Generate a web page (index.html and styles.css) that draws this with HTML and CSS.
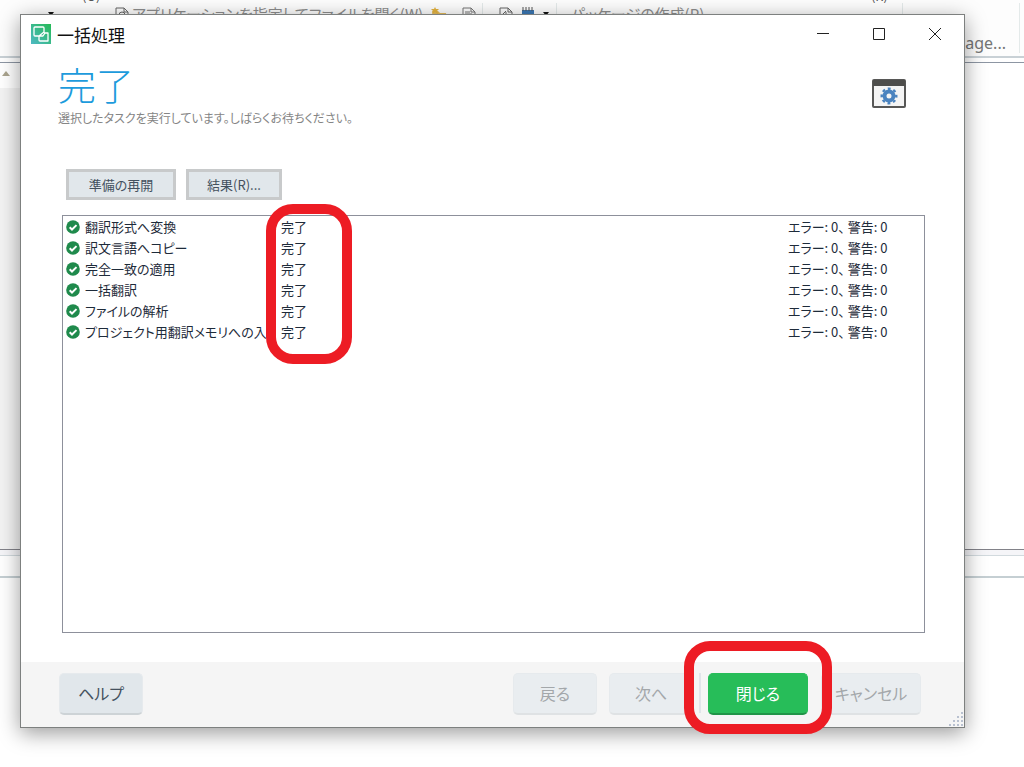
FILE: index.html
```
<!DOCTYPE html>
<html lang="ja">
<head>
<meta charset="UTF-8">
<title>一括処理</title>
<link rel="stylesheet" href="styles.css">
</head>
<body>
<div class="app">
<div class="ribbon">
<div class="rowtop"><span>(O)</span><span>(R)</span></div>
<div class="rowmid">
<div class="group g1">
<i class="drop"></i>
<svg class="ico" viewBox="0 0 14 16"><path d="M1 15V1h8l4 4v10z M9 1v4h4" fill="none" stroke="#666"/><circle cx="7" cy="8" r="3" fill="none" stroke="#666"/></svg>
<span class="cmd">アプリケーションを指定してファイルを開く(W)</span>
<svg class="folder" viewBox="0 0 16 16"><path d="M1 4h6l2 2h6l1 8H3z" fill="#e8bd5c"/><path d="M4 0l1 2h3L6 4l1 3-3-2-3 2 1-3-2-2h3z" fill="#e3b23e"/></svg>
<svg class="ico" viewBox="0 0 14 16"><path d="M1 15V1h8l4 4v10z M9 1v4h4 M3 5h5M3 7h7M3 9h7" fill="none" stroke="#777"/></svg>
</div>
<div class="group g2">
<svg class="ico" viewBox="0 0 14 16"><path d="M1 15V1h8l4 4v10z M9 1v4h4 M7 5v5M4 7l3-3" fill="none" stroke="#666"/></svg>
<svg class="ico" viewBox="0 0 14 16"><path d="M1 3h12v12H1z" fill="#3b78b5"/><path d="M2 0v4M5 0v4M8 0v4M11 0v4" stroke="#555"/></svg>
<i class="drop"></i>
</div>
<div class="group g3"><span class="cmd">パッケージの作成(P)</span></div>
<div class="group g4"><span class="more">age...</span></div>
</div>
</div>
<div class="pane"><div class="scroll"><i class="up"></i></div></div>
<div class="tabs"></div>
<div class="status"></div>
</div>

<div class="dialog" role="dialog" aria-labelledby="caption">
<div class="titlebar">
<svg class="logo" viewBox="0 0 20 20"><defs><linearGradient id="lg" x1="0" y1="1" x2="1" y2="0"><stop offset="0" stop-color="#4fb9c4"/><stop offset="1" stop-color="#25ba56"/></linearGradient></defs><path d="M0 0h20v20H0z" fill="url(#lg)"/><path d="M8 12H4Q3 12 3 11V4Q3 3 4 3h8q1 0 1 1v4l-5 4v4q0 1 1 1h8V9h-4M8 12h4l2-3" fill="none" stroke="#fff" stroke-width="1.3" stroke-linejoin="round"/></svg>
<span id="caption" class="caption">一括処理</span>
<button class="win" aria-label="最小化"><svg viewBox="0 0 12 12"><path d="M0 5.5h12"/></svg></button>
<button class="win" aria-label="最大化"><svg viewBox="0 0 12 12"><path d="M.5 .5h11v11H.5z"/></svg></button>
<button class="win" aria-label="閉じる"><svg viewBox="0 0 12 12"><path d="M0 0l12 12M12 0L0 12"/></svg></button>
</div>
<div class="head">
<div>
<h1>完了</h1>
<p>選択したタスクを実行しています。しばらくお待ちください。</p>
</div>
<svg class="gear" viewBox="0 0 34 29"><rect x="1" y="1" width="32" height="27" rx="1" fill="#f4f4f4" stroke="#575756" stroke-width="2"/><path d="M1 1h32v6H1z" fill="#4d4d4b"/><circle cx="17" cy="17" r="4.5" fill="none" stroke="#4a83bf" stroke-width="4"/><circle cx="17" cy="17" r="7.3" fill="none" stroke="#4a83bf" stroke-width="2.4" stroke-dasharray="2.87 2.86" stroke-dashoffset="1.43"/></svg>
</div>
<div class="tools">
<button class="flat">準備の再開</button>
<button class="flat result">結果(R)...</button>
</div>
<div class="list">
<svg width="0" height="0" class="defs"><symbol id="ok" viewBox="0 0 14 14"><circle cx="7" cy="7" r="6.8" fill="#1f8a4c"/><path d="M3.7 7.2l2.3 2.3 4.5-4.4" fill="none" stroke="#fff" stroke-width="2"/></symbol></svg>
<table>
<colgroup><col class="task"><col><col class="count"></colgroup>
<tr><td><svg class="ok"><use href="#ok"/></svg>翻訳形式へ変換</td><td>完了</td><td>エラー: 0、 警告: 0</td></tr>
<tr><td><svg class="ok"><use href="#ok"/></svg>訳文言語へコピー</td><td>完了</td><td>エラー: 0、 警告: 0</td></tr>
<tr><td><svg class="ok"><use href="#ok"/></svg>完全一致の適用</td><td>完了</td><td>エラー: 0、 警告: 0</td></tr>
<tr><td><svg class="ok"><use href="#ok"/></svg>一括翻訳</td><td>完了</td><td>エラー: 0、 警告: 0</td></tr>
<tr><td><svg class="ok"><use href="#ok"/></svg>ファイルの解析</td><td>完了</td><td>エラー: 0、 警告: 0</td></tr>
<tr><td><svg class="ok"><use href="#ok"/></svg>プロジェクト用翻訳メモリへの入力</td><td>完了</td><td>エラー: 0、 警告: 0</td></tr>
</table>
<div class="mark markdone"></div>
</div>
<div class="foot">
<button class="btn help">ヘルプ</button>
<button class="btn" disabled>戻る</button>
<button class="btn" disabled>次へ</button>
<i class="sep"></i>
<div class="closebox"><button class="btn close">閉じる</button><div class="mark markclose"></div></div>
<button class="btn cancel" disabled>キャンセル</button>
<svg class="grip" viewBox="0 0 14 14"><path d="M12 0v14M8 4v10M4 8v6M0 12v2" transform="translate(1 0)" fill="none" stroke="#b9c1d0" stroke-width="2" stroke-dasharray="2 2"/></svg>
</div>
</div>
</body>
</html>
```
FILE: styles.css
```
*{box-sizing:border-box;}
html,body{height:100%;}
body{margin:0;overflow:hidden;background:#fff;color:#1e2b3a;font:13px/21px "Noto Sans CJK JP",sans-serif;font-feature-settings:"palt";}
button{font:inherit;font-feature-settings:inherit;padding:0;border:0;white-space:nowrap;}
svg{display:block;flex:none;}

.app{height:100%;display:flex;flex-direction:column;}
.ribbon{flex:none;height:63px;overflow:hidden;background:#fdfdfd;border-bottom:1px solid #8d96a3;box-shadow:inset 0 -4px #fff,inset 0 -6px #c9d1d6;}
.rowtop{height:3px;overflow:hidden;display:flex;align-items:flex-end;justify-content:space-between;padding:0 136px 0 82px;line-height:15px;color:#555;}
.rowmid{height:50px;display:flex;}
.group{display:flex;align-items:flex-start;padding-top:4px;border-right:1px solid #e4eaea;}
.g1{width:483px;padding-left:48px;}
.g2{width:74px;padding-left:16px;gap:8px;}
.g3{width:346px;padding-left:14px;}
.g4{flex:1;justify-content:flex-end;align-items:flex-end;margin-right:4px;padding-right:13px;}
.g1 .drop{margin-right:61px;}
.ico{width:14px;height:16px;}
.g1 .cmd{width:292px;margin:0 7px 0 3px;}
.folder{width:16px;height:16px;margin-right:15px;}
.cmd{font-size:15px;line-height:14px;color:#8d8d8d;white-space:nowrap;}
.more{font:16px/20px "Noto Sans",sans-serif;color:#757575;}
.drop{margin-top:5px;border:3px solid transparent;border-top:4px solid #111;}
.pane{flex:1;}
.scroll{width:20px;height:100%;padding:8px 2px;background:linear-gradient(#fff 25px,#f3f3f3 25px);}
.up{display:block;border:4px solid transparent;border-top:0;border-bottom:5px solid #aaa48e;width:8px;}
.tabs{flex:none;height:29px;border-top:1px solid #828289;border-bottom:2px solid #c5cfd3;background:linear-gradient(#f5f5f8 5px,#d2dade 5px,#d2dade 6px,#fff 6px);}
.status{flex:none;height:189px;}

.dialog{position:absolute;top:14px;right:59px;bottom:39px;left:20px;display:flex;flex-direction:column;background:#fff;border:1px solid #7d807f;box-shadow:0 5px 20px rgba(0,0,0,.4);}
.titlebar{display:flex;align-items:center;height:38px;padding:0 1px 0 10px;}
.logo{width:20px;height:20px;margin-right:6px;}
.caption{flex:1;font-size:17px;color:#111;}
.win{width:56px;height:38px;background:none;display:flex;align-items:center;justify-content:center;}
.win svg{width:12px;height:12px;fill:none;stroke:#222;}
.head{display:flex;justify-content:space-between;align-items:flex-start;height:116px;padding:8px 58px 0 37px;}
h1{margin:0;font-size:38px;line-height:46px;font-weight:300;color:#1d9bdc;}
p{margin:0;font-size:12px;color:#858585;}
.gear{width:34px;height:29px;margin-top:18px;}
.tools{display:flex;gap:10px;padding:0 45px;margin-bottom:15px;}
.flat{width:110px;height:31px;border:3px solid #c8cacb;background:#e1e7eb;color:#44515e;}
.result{width:96px;}
.list{position:relative;flex:1;margin:0 39px 29px 41px;border:1px solid #8d909b;}
.defs{position:absolute;}
table{width:100%;table-layout:fixed;border-spacing:0;}
td{height:21px;padding:0;white-space:nowrap;overflow:hidden;}
td:first-child{border-right:8px solid transparent;}
.task{width:218px;}
.count{width:136px;}
.ok{float:left;width:14px;height:14px;margin:4px 5px 0 3px;}
.foot{position:relative;display:flex;align-items:flex-start;height:65px;padding:11px 43px 0 38px;background:#f5f5f5;}
.btn{width:84px;height:42px;margin-right:12px;border:1px solid #e6eaed;border-bottom:2px solid #cdd3d6;border-radius:5px;background:#e1e7eb;color:#44515e;font-size:16px;}
.btn:disabled{background:#e9edf0;border-bottom-color:#dfe2e4;color:#a3a7aa;}
.help{margin-right:auto;}
.sep{width:2px;height:40px;margin:0 7px 0 -6px;background:#e1e5ea;}
.closebox{position:relative;margin-right:13px;}
.btn.close{display:block;width:100px;margin:0;background:#27bd59;border-color:#27bd59;border-bottom-color:#209447;color:#fff;}
.cancel{width:100px;margin:0;}
.mark{position:absolute;border:10px solid #ed1c24;pointer-events:none;}
.markdone{left:203px;top:-12px;width:86px;height:160px;border-radius:27px;}
.markclose{top:-32px;right:-24px;bottom:-19px;left:-24px;border-radius:26px;z-index:1;}
.grip{position:absolute;right:1px;bottom:1px;width:14px;height:14px;}
```
